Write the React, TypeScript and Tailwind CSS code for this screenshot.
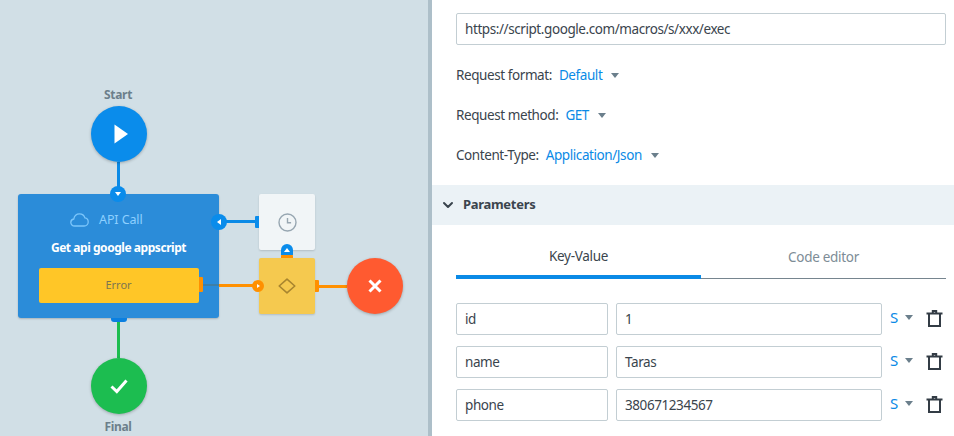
import { ChevronDown } from "lucide-react";

const font = { fontFamily: '"Noto Sans", sans-serif' };

function Caret({ className }: { className?: string }) {
  return <span className={`inline-block h-0 w-0 border-x-[4px] border-t-[5px] border-x-transparent border-t-[#6b7f8c] ${className ?? "ml-[9px]"}`} />;
}

function Select({ label, value, className }: { label: string; value: string; className?: string }) {
  return (
    <div className={`flex h-5 items-center text-[13.5px] tracking-[-0.42px] text-[#3a444d] ${className ?? ""}`}>
      <span>{label}</span>
      <span className="ml-[7px] text-[#0a8ae6]">{value}</span>
      <Caret />
    </div>
  );
}

function TextBox({ value, className }: { value: string; className: string }) {
  return (
    <div className={`flex h-8 items-center rounded-[2px] border border-[#c3ced3] bg-white px-2 text-[13.5px] tracking-[-0.42px] text-[#3a444d] ${className}`}>
      {value}
    </div>
  );
}

function ParamRow({ name, value }: { name: string; value: string }) {
  return (
    <div className="flex h-8 items-center">
      <TextBox value={name} className="w-[152px]" />
      <TextBox value={value} className="ml-2 w-[266px]" />
      <span className="ml-2 -mt-[3px] w-2 text-[15px] text-[#0a8ae6]">S</span>
      <Caret className="ml-[7px] -mt-[3px]" />
      <svg className="ml-[13px]" width="17" height="18" viewBox="0 0 17 18" fill="none" stroke="#333c45" strokeWidth="2">
        <path d="M0.5 3.5h16M3 3.5V16h11V3.5M6.8 3.5V1h3.4v2.5" />
      </svg>
    </div>
  );
}

function Canvas() {
  return (
    <div className="relative h-full w-[428px] shrink-0 overflow-hidden bg-[#d1dfe6]">
      {/* connectors */}
      <div className="absolute left-[117px] top-[162px] h-7 w-[3px] bg-[#0a8ae6]" />
      <div className="absolute left-[117px] top-[322px] h-9 w-[3px] bg-[#1cbd50]" />
      <div className="absolute left-[226px] top-[220px] h-[3px] w-[30px] bg-[#0a8ae6]" />
      <div className="absolute left-[319px] top-[285px] h-[3px] w-7 bg-[#ff9000]" />

      <div className="absolute left-[78px] top-[86px] w-20 text-center text-[12px] font-bold tracking-[-0.3px] text-[#6c7f8b]">Start</div>
      <div className="absolute left-[91px] top-[106px] flex h-14 w-14 items-center justify-center rounded-full bg-[#0a8ceb] shadow-[0_1px_3px_rgba(0,0,0,0.25)]">
        <svg width="16" height="20" viewBox="0 0 16 20" className="ml-[3px]"><path d="M1.5 0.5L15 10L1.5 19.5Z" fill="#fff" /></svg>
      </div>

      {/* API call card */}
      <div className="absolute left-[18px] top-[194px] h-[124px] w-[201px] rounded-[3px] bg-[#2b8cd9] shadow-[0_1px_2px_rgba(0,0,0,0.2)]">
        <div className="mt-[17px] flex h-[18px] items-center pl-[52px] text-[12.5px] tracking-[-0.1px] text-[#8ed0ff]">
          <svg width="19" height="14" viewBox="0 0 19 14" fill="none" stroke="#7cc6fb" strokeWidth="1.3">
            <path d="M4.6 13C2.4 13 .8 11.4.8 9.5c0-1.8 1.3-3.2 3-3.5C4.3 3 6.7.9 9.5.9c2.6 0 4.7 1.7 5.4 4 1.9.3 3.3 2 3.3 4 0 2.2-1.8 4.1-4.1 4.1Z" />
          </svg>
          <span className="ml-[10px]">API Call</span>
        </div>
        <div className="mt-[10px] text-center text-[12px] font-bold tracking-[-0.45px] text-white">Get api google appscript</div>
        <div className="mx-auto mt-[11px] flex h-[35px] w-[160px] items-center justify-center rounded-[2px] bg-[#ffc627] text-[11px] text-[#7c7550]">Error</div>
      </div>

      {/* error line crossing the card */}
      <div className="absolute left-[202px] top-[284px] h-[2px] w-[17px] bg-[#3f7fa6]" />
      <div className="absolute left-[219px] top-[284px] h-[3px] w-9 bg-[#ff9000]" />
      <div className="absolute left-[199px] top-[277px] h-[15px] w-1 rounded-r-[1px] bg-[#ff9000]" />

      {/* ports */}
      <div className="absolute left-[110px] top-[186px] flex h-4 w-4 items-center justify-center rounded-full bg-[#0a8ceb]">
        <span className="h-0 w-0 border-x-[3px] border-t-[4px] border-x-transparent border-t-white" />
      </div>
      <div className="absolute left-[111px] top-[318px] h-1 w-[16px] rounded-b-[3px] bg-[#0a7fe0]" />
      <div className="absolute left-[211px] top-[214px] flex h-4 w-4 items-center justify-center rounded-full bg-[#0a8ceb]">
        <span className="h-0 w-0 border-y-[3px] border-r-[4px] border-y-transparent border-r-white" />
      </div>

      <div className="absolute left-[91px] top-[358px] flex h-14 w-14 items-center justify-center rounded-full bg-[#1cbd50] shadow-[0_1px_3px_rgba(0,0,0,0.25)]">
        <svg width="18" height="15" viewBox="0 0 18 15" fill="none" stroke="#fff" strokeWidth="3"><path d="M1.5 7.5L6.8 12.5L16.5 1.5" /></svg>
      </div>
      <div className="absolute left-[78px] top-[418px] w-20 text-center text-[12px] font-bold tracking-[-0.3px] text-[#6c7f8b]">Final</div>

      {/* delay node */}
      <div className="absolute left-[259px] top-[194px] flex h-14 w-14 items-center justify-center rounded-[2px] bg-[#f1f5f7] shadow-[0_1px_2px_rgba(0,0,0,0.15)]">
        <svg width="19" height="19" viewBox="0 0 19 19" fill="none" stroke="#97a6b1" strokeWidth="1.4">
          <circle cx="9.5" cy="9.5" r="8.5" /><path d="M9.5 5v4.8h3.6" />
        </svg>
      </div>
      <div className="absolute left-[255px] top-[216px] h-3 w-1 rounded-l-[1px] bg-[#0a8ceb]" />

      {/* condition node */}
      <div className="absolute left-[259px] top-[258px] flex h-14 w-14 items-center justify-center rounded-[2px] bg-[#f5c94f] shadow-[0_1px_2px_rgba(0,0,0,0.15)]">
        <svg width="18" height="16" viewBox="0 0 18 16" fill="none" stroke="#a8852f" strokeWidth="1.6" strokeLinejoin="round">
          <path d="M9 1.2L16.8 8L9 14.8L1.2 8Z" />
        </svg>
      </div>
      <div className="absolute left-[281px] top-[254px] h-1 w-3 rounded-t-[2px] bg-[#ff9000]" />
      <div className="absolute left-[281px] top-[244px] flex h-[11px] w-3 items-center justify-center rounded-t-full bg-[#0a8ceb]">
        <span className="h-0 w-0 border-x-[3px] border-b-[4px] border-x-transparent border-b-white" />
      </div>
      <div className="absolute left-[252px] top-[280px] flex h-3 w-3 items-center justify-center rounded-full bg-[#ff9000]">
        <span className="h-0 w-0 border-y-[2px] border-l-[3px] border-y-transparent border-l-white" />
      </div>
      <div className="absolute left-[315px] top-[280px] h-3 w-1 rounded-r-[1px] bg-[#ff9000]" />

      <div className="absolute left-[347px] top-[258px] flex h-14 w-14 items-center justify-center rounded-full bg-[#ff5a30] shadow-[0_1px_3px_rgba(0,0,0,0.25)]">
        <svg width="14" height="14" viewBox="0 0 14 14" stroke="#fff" strokeWidth="3"><path d="M1.5 1.5l11 11M12.5 1.5l-11 11" /></svg>
      </div>
    </div>
  );
}

export default function App() {
  return (
    <div className="flex h-[436px] w-[954px] overflow-hidden bg-white" style={font}>
      <Canvas />
      <div className="h-full w-1 shrink-0 bg-[#adbfc9]" />
      <div className="flex-1">
        <div className="pl-6 pr-2 pt-[13px]">
          <TextBox value="https://script.google.com/macros/s/xxx/exec" className="w-[490px]" />
          <Select label="Request format:" value="Default" className="mt-5" />
          <Select label="Request method:" value="GET" className="mt-5" />
          <Select label="Content-Type:" value="Application/Json" className="mt-5" />
        </div>
        <div className="mt-5 flex h-10 items-center bg-[#ebf2f6] pl-2 text-[13px] font-bold tracking-[-0.3px] text-[#3a444d]">
          <ChevronDown size={16} strokeWidth={3} color="#3a444d" />
          <span className="ml-[7px]">Parameters</span>
        </div>
        <div className="pl-6 pr-2">
          <div className="flex h-[54px] border-b border-[#76858f] text-[13.5px] tracking-[-0.3px]">
            <div className="flex h-[54px] w-[245px] items-center justify-center border-b-4 border-[#0a8ae6] pt-[12px] text-[#3a444d]">Key-Value</div>
            <div className="flex w-[245px] items-center justify-center pt-[12px] text-[#7d8c96]">Code editor</div>
          </div>
          <div className="mt-[24px] flex flex-col gap-[11px]">
            <ParamRow name="id" value="1" />
            <ParamRow name="name" value="Taras" />
            <ParamRow name="phone" value="380671234567" />
          </div>
        </div>
      </div>
    </div>
  );
}
